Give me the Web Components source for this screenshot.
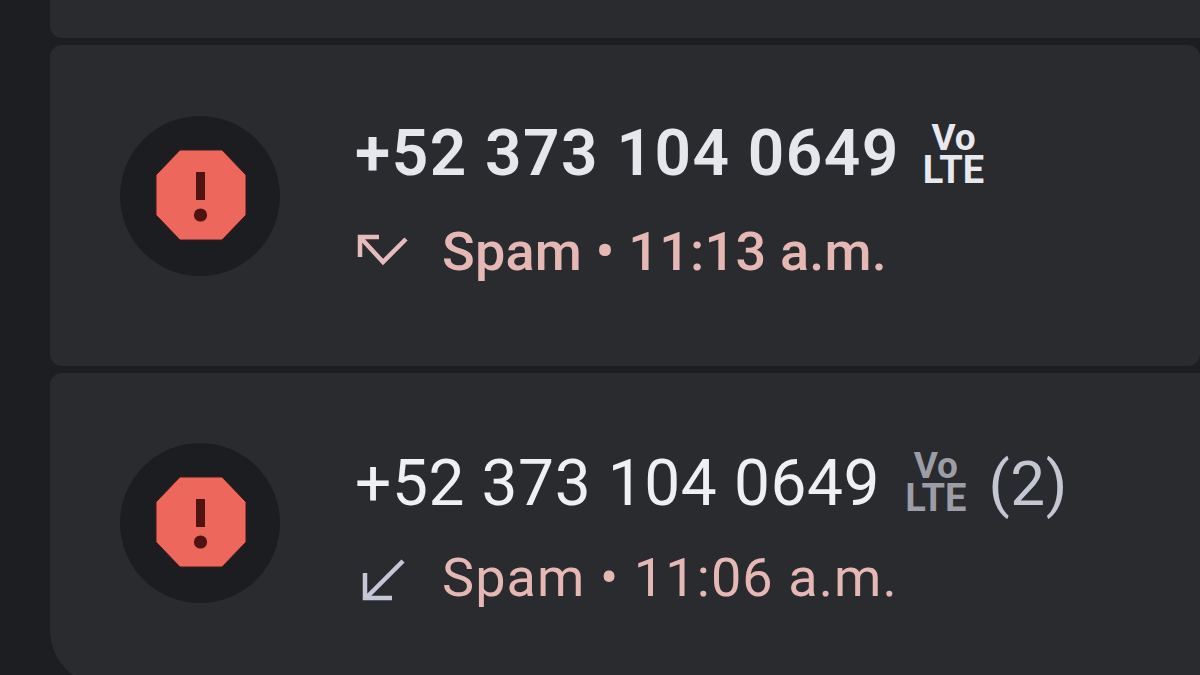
<!DOCTYPE html>
<html lang="es">
<head>
<meta charset="utf-8">
<title>Llamadas</title>
<style>
html, body { margin: 0; height: 100%; background: #1d1e21; }
body { overflow: hidden; font-family: Roboto, "Liberation Sans", sans-serif; }
</style>
</head>
<body>
<call-log>
	<call-card kind="stub"></call-card>
	<call-card number="+52 373 104 0649" time="Spam • 11:13 a.m." call="missed" unread></call-card>
	<call-card number="+52 373 104 0649" time="Spam • 11:06 a.m." call="incoming" count="(2)" last></call-card>
</call-log>
<script>
// Template - list of calls
const logTemplate = document.createElement('template');
logTemplate.innerHTML = `<style>
:host {
	display: flex;
	flex-direction: column;
	gap: 7px;
	height: 675px;
	padding-left: 50px;
	overflow: hidden;
}
</style>
<slot></slot>`;

class CallLog extends HTMLElement {
	connectedCallback() {
		const shadow = this.attachShadow({ mode: 'open' });
		shadow.appendChild(logTemplate.content.cloneNode(true));
	}
}

// Template - red octagon in dark circle
const avatarTemplate = document.createElement('template');
avatarTemplate.innerHTML = `<style>
:host {
	display: block;
	flex: none;
	width: 160px;
	height: 160px;
}
svg { display: block; }
</style>
<svg width="160" height="160" viewBox="0 0 160 160">
	<circle cx="80" cy="80" r="80" fill="#1c1d20"/>
	<polygon points="60,34 102,34 126,59 126,99 102,124 60,124 36,99 36,59" fill="#ee675c" stroke="#3a1a1a" stroke-width="1"/>
	<rect x="76" y="56" width="9" height="28" fill="#4d1412"/>
	<circle cx="80.5" cy="99" r="6.6" fill="#4d1412"/>
</svg>`;

class CallAvatar extends HTMLElement {
	connectedCallback() {
		const shadow = this.attachShadow({ mode: 'open' });
		shadow.appendChild(avatarTemplate.content.cloneNode(true));
	}
}

// Template - VoLTE mark, color comes from the host
const badgeTemplate = document.createElement('template');
badgeTemplate.innerHTML = `<style>
:host {
	display: inline-flex;
	flex-direction: column;
	align-items: center;
	font-weight: 700;
	line-height: 33px;
	letter-spacing: 0;
}
.vo { font-size: 37px; }
.lte { font-size: 38px; }
</style>
<span class="vo">Vo</span>
<span class="lte">LTE</span>`;

class VolteBadge extends HTMLElement {
	connectedCallback() {
		const shadow = this.attachShadow({ mode: 'open' });
		shadow.appendChild(badgeTemplate.content.cloneNode(true));
	}
}

// Call direction arrows
const ARROWS = {
	missed: { color: '#e5bcbc', d: 'M379 240H360V260M360 240L383 265L406 242' },
	incoming: { color: '#c6c7d6', d: 'M403 558L366 595M365 570V595H392' }
};

class CallIcon extends HTMLElement {
	connectedCallback() {
		const shadow = this.attachShadow({ mode: 'open' });
		const arrow = ARROWS[this.getAttribute('type')];
		const top = this.getAttribute('type') === 'missed' ? 230 : 550;
		shadow.innerHTML = `<style>
:host { display: block; flex: none; width: 87px; height: 50px; }
svg { display: block; }
</style>
<svg width="60" height="50" viewBox="355 ${top} 60 50">
	<path d="${arrow.d}" fill="none" stroke="${arrow.color}" stroke-width="4.5"/>
</svg>`;
	}
}

// Template - one row of the list
const cardTemplate = document.createElement('template');
cardTemplate.innerHTML = `<style>
:host {
	display: flex;
	flex: none;
	box-sizing: border-box;
	align-items: flex-start;
	gap: 75px;
	height: 321px;
	padding: 71px 0 0 70px;
	background: #2a2b2f;
	border-radius: 12px;
}
:host([kind="stub"]) {
	height: 38px;
	padding: 0;
	border-radius: 0 0 0 12px;
}
:host([last]) {
	height: 312px;
	padding-top: 70px;
	border-radius: 12px 0 0 55px;
}
.body { padding-top: 3px; }
:host([last]) .body { padding-top: 6px; }
.top {
	display: flex;
	align-items: center;
	height: 70px;
	font-size: 64px;
	line-height: 70px;
	letter-spacing: 0.6px;
	color: #eef0f3;
	white-space: nowrap;
}
:host([unread]) .top { font-weight: 600; color: #e6e7ec; letter-spacing: 1.45px; }
volte-badge { margin-left: 23px; color: #e8e9ee; }
:host([last]) volte-badge { color: #9c9da6; margin-left: 25px; transform: translateY(-2px); }
.count {
	margin-left: 22px;
	color: #c4c6d1;
	font-size: 62px;
}
.bottom {
	display: flex;
	align-items: center;
	height: 50px;
	margin-top: 38px;
	font-size: 54px;
	line-height: 50px;
	letter-spacing: 0.2px;
	color: #e6b8b5;
	white-space: nowrap;
}
:host([last]) .bottom { margin-top: 34px; letter-spacing: 1.1px; }
:host([unread]) .bottom { font-weight: 500; }
</style>`;

class CallCard extends HTMLElement {
	connectedCallback() {
		const shadow = this.attachShadow({ mode: 'open' });
		shadow.appendChild(cardTemplate.content.cloneNode(true));
		if (this.getAttribute('kind') === 'stub') return;

		const count = this.getAttribute('count');
		const row = document.createElement('template');
		row.innerHTML = `<call-avatar></call-avatar>
<div class="body">
	<div class="top">
		<span class="number"></span>
		<volte-badge></volte-badge>
		${count ? '<span class="count"></span>' : ''}
	</div>
	<div class="bottom">
		<call-icon type="${this.getAttribute('call')}"></call-icon>
		<span class="time"></span>
	</div>
</div>`;
		row.content.querySelector('.number').textContent = this.getAttribute('number');
		row.content.querySelector('.time').textContent = this.getAttribute('time');
		if (count) row.content.querySelector('.count').textContent = count;
		shadow.appendChild(row.content);
	}
}

customElements.define('call-log', CallLog);
customElements.define('call-avatar', CallAvatar);
customElements.define('volte-badge', VolteBadge);
customElements.define('call-icon', CallIcon);
customElements.define('call-card', CallCard);
</script>
</body>
</html>
